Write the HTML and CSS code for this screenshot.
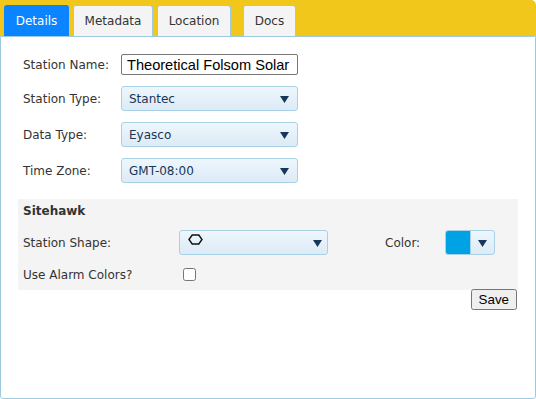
FILE: index.html
```html
<!DOCTYPE html>
<html>
<head>
<title>Station Details</title>
<link rel="stylesheet" href="styles.css">
</head>
<body>
	<div class="page">
		<div class="tab-bar">
			<span class="tab active">Details</span>
			<span class="tab">Metadata</span>
			<span class="tab">Location</span>
			<span class="tab tab-docs">Docs</span>
		</div>
		<div class="tab-cont">
			<div class="form-list">
				<div class="form-row first">
					<label class="form-label">Station Name:</label>
					<input class="text-input" type="text" value="Theoretical Folsom Solar">
				</div>
				<div class="form-row">
					<label class="form-label">Station Type:</label>
					<div class="dd dd-wide"><span class="dd-text">Stantec</span><span class="dd-arrow"><svg width="9" height="7" viewBox="0 0 9 7"><polygon points="0,0 9,0 4.5,7" fill="#17365a"/></svg></span></div>
				</div>
				<div class="form-row">
					<label class="form-label">Data Type:</label>
					<div class="dd dd-wide"><span class="dd-text">Eyasco</span><span class="dd-arrow"><svg width="9" height="7" viewBox="0 0 9 7"><polygon points="0,0 9,0 4.5,7" fill="#17365a"/></svg></span></div>
				</div>
				<div class="form-row">
					<label class="form-label">Time Zone:</label>
					<div class="dd dd-wide"><span class="dd-text">GMT-08:00</span><span class="dd-arrow"><svg width="9" height="7" viewBox="0 0 9 7"><polygon points="0,0 9,0 4.5,7" fill="#17365a"/></svg></span></div>
				</div>
			</div>

			<div class="site-box">
				<div class="site-title">Sitehawk</div>
				<div class="site-row">
					<label class="site-label">Station Shape:</label>
					<div class="dd dd-shape">
						<span class="dd-text shape-icon"><svg width="15" height="11" viewBox="0 0 15 11"><polygon points="1,5.5 4.2,1 10.8,1 14,5.5 10.8,10 4.2,10" fill="none" stroke="#111" stroke-width="1.4"/></svg></span>
						<span class="dd-arrow"><svg width="9" height="7" viewBox="0 0 9 7"><polygon points="0,0 9,0 4.5,7" fill="#17365a"/></svg></span>
					</div>
					<label class="color-label">Color:</label>
					<div class="color-pick">
						<span class="color-swatch"></span>
						<span class="color-arrow"><svg width="9" height="7" viewBox="0 0 9 7"><polygon points="0,0 9,0 4.5,7" fill="#17365a"/></svg></span>
					</div>
				</div>
				<div class="site-row alarm-row">
					<label class="site-label">Use Alarm Colors?</label>
					<input class="alarm-check" type="checkbox">
				</div>
			</div>
			<div class="btn-line">
				<button class="save-btn">Save</button>
			</div>
		</div>
	</div>
</body>
</html>
```

FILE: styles.css
```css
html, body{
	margin:0;
	padding:0;
}
body{
	font-family:"DejaVu Sans", Verdana, sans-serif;
	font-size:12px;
	color:#333333;
	background:#ffffff;
}
.page{
	display:flex;
	flex-direction:column;
	height:399px;
	width:536px;
}
.tab-bar{
	display:flex;
	align-items:flex-end;
	gap:4px;
	height:36px;
	padding:0 0 0 4px;
	box-sizing:border-box;
	background:#f2c71b;
	border-radius:0 5px 0 0;
}
.tab{
	display:flex;
	align-items:center;
	justify-content:center;
	height:31px;
	box-sizing:border-box;
	padding:0 12px;
	background:#f4f4f4;
	border:1px solid #9fcbe0;
	border-bottom:none;
	border-radius:3px 3px 0 0;
	color:#333333;
}
.tab:nth-child(2){
	width:80px;
}
.tab:nth-child(3){
	width:74px;
}
.tab.active{
	width:65px;
	background:#0a84ff;
	border-color:#0a84ff;
	color:#ffffff;
}
.tab-docs{
	width:53px;
	margin-left:8px;
}
.tab-cont{
	flex:1;
	border:1px solid #9fcbe0;
	border-radius:0 0 3px 3px;
	padding:16px 17px 0 17px;
}
.form-list{
	display:flex;
	flex-direction:column;
	gap:11px;
	padding:0 5px;
}
.form-row{
	display:flex;
	align-items:center;
	height:25px;
}
.form-row.first{
	margin-top:-1px;
	margin-bottom:-2px;
}
.form-label{
	width:98px;
	flex:none;
}
.text-input{
	width:177px;
	height:21px;
	box-sizing:border-box;
	padding:1px 4px 1px 5px;
	border:1px solid #767676;
	border-radius:2px;
	font-family:"Liberation Sans", Arial, sans-serif;
	font-size:14.6px;
	color:#000000;
}
.dd{
	display:flex;
	align-items:center;
	justify-content:space-between;
	height:25px;
	box-sizing:border-box;
	padding:0 8px 0 7px;
	border:1px solid #a8d1e6;
	border-radius:3px;
	background:linear-gradient(#eef6fc, #dcebf6);
	color:#17365a;
}
.dd-wide{
	width:177px;
}
.dd-arrow{
	display:flex;
	margin-top:2px;
}
.site-box{
	margin-top:16px;
	background:#f4f4f4;
	padding:4px 5px 0 5px;
	height:91px;
	box-sizing:border-box;
}
.site-title{
	font-weight:bold;
	line-height:16px;
}
.site-row{
	display:flex;
	align-items:center;
	height:25px;
	margin-top:11px;
}
.alarm-row{
	margin-top:7px;
}
.site-label{
	width:156px;
	flex:none;
}
.dd-shape{
	width:149px;
	padding-left:8px;
	padding-right:5px;
	align-items:flex-start;
}
.shape-icon{
	display:flex;
	margin-top:3px;
}
.dd-shape .dd-arrow{
	margin-top:9px;
}
.color-label{
	margin-left:57px;
	width:60px;
}
.color-pick{
	display:flex;
	width:50px;
	height:25px;
	box-sizing:border-box;
	border:1px solid #a8d1e6;
	border-radius:3px;
	overflow:hidden;
	background:linear-gradient(#eef6fc, #dcebf6);
}
.color-swatch{
	width:24px;
	background:#00a2e6;
}
.color-arrow{
	flex:1;
	display:flex;
	align-items:center;
	justify-content:center;
	padding-top:2px;
	border-left:1px solid #a8d1e6;
}
.alarm-check{
	width:13px;
	height:13px;
	margin:0 0 0 4px;
}
.btn-line{
	display:flex;
	justify-content:flex-end;
	padding-right:1px;
	margin-top:-1px;
}
.save-btn{
	font-family:"Liberation Sans", Arial, sans-serif;
	font-size:13.33px;
	height:21px;
	padding:1px 6px;
}
```
